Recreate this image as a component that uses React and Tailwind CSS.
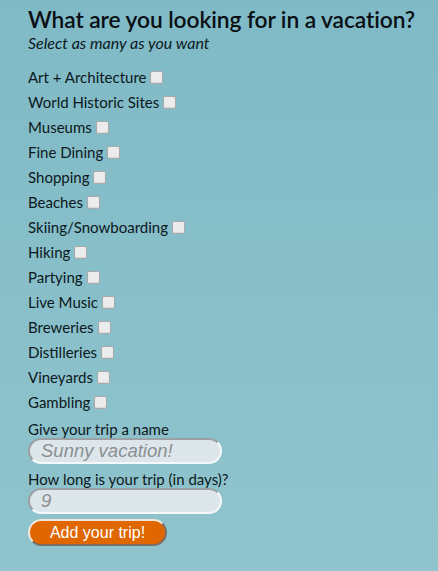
import React from "react";

const options = [
  "Art + Architecture",
  "World Historic Sites",
  "Museums",
  "Fine Dining",
  "Shopping",
  "Beaches",
  "Skiing/Snowboarding",
  "Hiking",
  "Partying",
  "Live Music",
  "Breweries",
  "Distilleries",
  "Vineyards",
  "Gambling",
];

const Check = () => (
  <input
    type="checkbox"
    className="appearance-none ml-[4px] w-[13px] h-[13px] border border-[#a9a9a9] bg-[#ececec] rounded-[2px] align-[-1px] shadow-[inset_0_-1px_1px_rgba(0,0,0,0.08)]"
  />
);

const inputCls =
  "block w-[194px] h-[26px] rounded-full bg-[#dde6ea] pl-[11px] pr-[12px] text-[18.5px] italic font-['Liberation_Sans',sans-serif] placeholder:text-[#8a8f92] border-2 border-t-[#9aa0a3] border-l-[#9aa0a3] border-r-[#f4f8f9] border-b-[#f4f8f9] outline-none";

const App = () => {
  return (
    <div className="min-h-[571px] bg-gradient-to-b from-[#7fbac6] to-[#90c4cd] px-[28px] pt-[4px] text-[#0c1820] font-['Lato','Liberation_Sans',sans-serif]">
      <h1 className="whitespace-nowrap text-[22.8px] font-semibold leading-[30px] tracking-[-0.1px] text-[#0a0f14]">
        What are you looking for in a vacation?
      </h1>
      <p className="italic text-[16px] leading-[18px]">Select as many as you want</p>

      <div className="mt-[13px] flex flex-col">
        {options.map((item) => (
          <label key={item} className="h-[25px] leading-[25px] text-[15px]">
            {item}
            <Check />
          </label>
        ))}
      </div>

      <div className="text-[15px] leading-[18px] mt-[5px]">Give your trip a name</div>
      <input type="text" placeholder="Sunny vacation!" className={inputCls} />
      <div className="text-[15px] leading-[18px] mt-[6px]">How long is your trip (in days)?</div>
      <input type="text" placeholder="9" className={inputCls} />
      <div className="mt-[5px]">
        <button className="w-[139px] h-[27px] rounded-full bg-[#e06700] text-white text-[16px] font-['Liberation_Sans',sans-serif] leading-none border-2 border-t-[#f0e6dc] border-l-[#f0e6dc] border-r-[#7a6e66] border-b-[#7a6e66]">
          Add your trip!
        </button>
      </div>
    </div>
  );
};

export default App;
